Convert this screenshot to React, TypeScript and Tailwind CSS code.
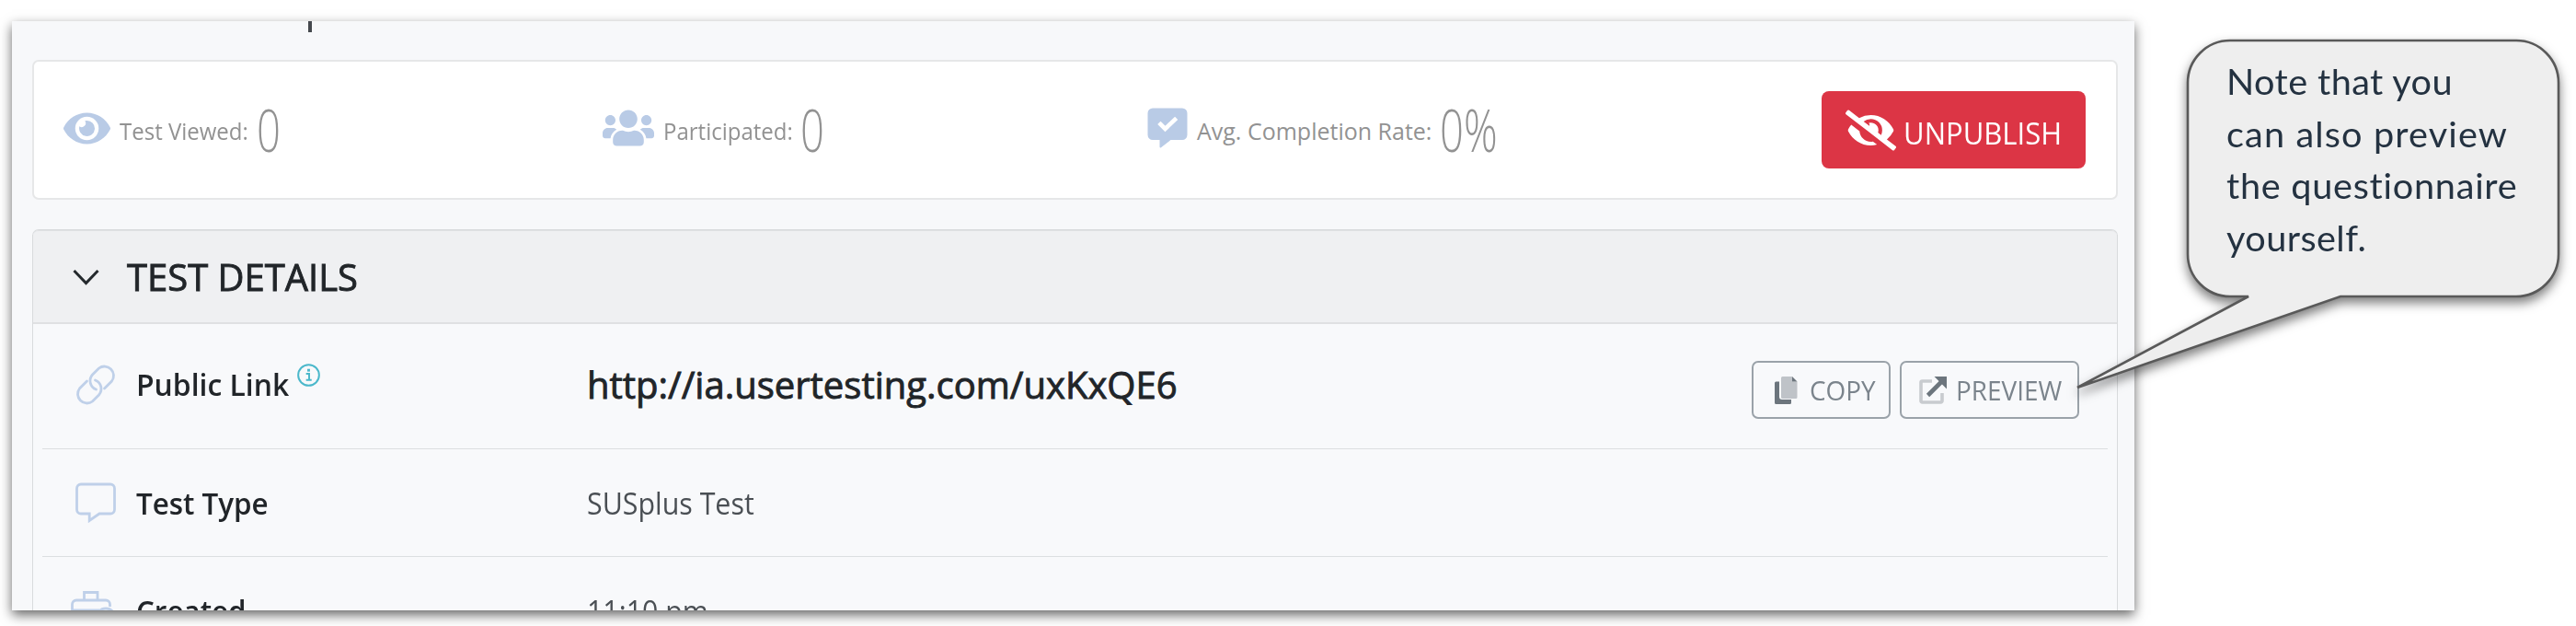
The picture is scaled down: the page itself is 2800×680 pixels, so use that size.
import type { ReactNode } from "react"
import { FaEye, FaEyeSlash, FaUsers } from "react-icons/fa"

const CommentCheckIcon = () => (
  <svg viewBox="0 0 44 44" className="h-[44px] w-[44px]" fill="none">
    <path d="M6 0.5h32a5.5 5.5 0 0 1 5.5 5.5v23.500a5.500 5.500 0 0 1-5.500 5.500H25.500L15 43.300c-.8.500-1.500.100-1.500-.8V35H6a5.500 5.500 0 0 1-5.500-5.500V6A5.500 5.500 0 0 1 6 .5z" fill="#b9cbe6" />
    <path d="M14.500 18l5 5L30 13" stroke="#fff" strokeWidth="4.600" strokeLinecap="square" />
  </svg>
)

const LinkIcon = () => (
  <svg viewBox="0 0 44 44" className="h-[44px] w-[44px]" fill="none" stroke="#bfd0e9" strokeWidth="2.8" strokeLinecap="round">
    <path d="M31.500 26l8-8A10 10 0 0 0 25.500 4l-7 7a10 10 0 0 0 4 16" />
    <path d="M12.500 18l-8 8a10 10 0 0 0 14 14l7-7a10 10 0 0 0-4-16" />
  </svg>
)

const CommentIcon = () => (
  <svg viewBox="0 0 44 44" className="h-[44px] w-[44px]" fill="none" stroke="#bfd0e9" strokeWidth="2.8">
    <path d="M6 2h32a4.500 4.500 0 0 1 4.500 4.500v23a4.500 4.500 0 0 1-4.500 4.500H26L15.200 41.500V34H6a4.500 4.500 0 0 1-4.500-4.500v-23A4.500 4.500 0 0 1 6 2z" />
  </svg>
)

const BriefcaseClockIcon = () => (
  <svg viewBox="0 0 48 44" className="h-[44px] w-[48px]" fill="none" stroke="#bfd0e9" strokeWidth="2.8">
    <path d="M28 38H6a4.500 4.500 0 0 1-4.500-4.500v-19A4.500 4.500 0 0 1 6 10h32a4.500 4.500 0 0 1 4.500 4.500V17M14.500 10V1.500h14.500V10M1.500 21H31" />
    <circle cx="38" cy="29.500" r="10.500" />
    <path d="M38 24v6h5" />
  </svg>
)

const InfoIcon = () => (
  <svg viewBox="0 0 24 24" className="h-[25px] w-[25px]" fill="none" stroke="#4bb8cb">
    <circle cx="12" cy="12" r="10.900" strokeWidth="1.900" />
    <path d="M9.300 10.500h3.200v6.500M9.300 17h5.800" strokeWidth="1.900" />
    <rect x="10.600" y="5.500" width="2.800" height="2.800" fill="#4bb8cb" stroke="none" />
  </svg>
)

const CopyIcon = () => (
  <svg viewBox="0 0 26 30" className="h-[30px] w-[26px]">
    <path d="M0 7a1.500 1.500 0 0 1 1.500-1.500H5V22a3 3 0 0 0 3 3h10v3.500a1.500 1.500 0 0 1-1.500 1.500h-15A1.500 1.500 0 0 1 0 28.500z" fill="#6c757d" />
    <path d="M7 1.500A1.500 1.500 0 0 1 8.500 0H19v5.500h5.500v17A1.500 1.500 0 0 1 23 24H8.500A1.500 1.500 0 0 1 7 22.500z" fill="#bfc3c8" />
    <path d="M19 0l5.500 5.500H19z" fill="#6c757d" />
  </svg>
)

const ExternalIcon = () => (
  <svg viewBox="0 0 30 30" className="h-[30px] w-[30px]" fill="none">
    <path d="M14 5H3.500A1.500 1.500 0 0 0 2 6.500v20A1.500 1.500 0 0 0 3.500 28h20a1.500 1.500 0 0 0 1.500-1.500V18" stroke="#c8cbcf" strokeWidth="3.600" />
    <path d="M9.500 20.500L24 6" stroke="#6c757d" strokeWidth="4.600" />
    <path d="M16.500 0H30v13.500l-4-4L20.500 4z" fill="#6c757d" />
  </svg>
)

type StatProps = {
  icon: ReactNode
  label: string
  value: string
  className: string
  labelClass: string
}

const Stat = ({ icon, label, value, className, labelClass }: StatProps) => (
  <div className={`flex shrink-0 items-center whitespace-nowrap text-[#929292] ${className}`}>
    <div className="mr-[10px] mb-[4px] shrink-0 text-[#b9cbe6]">{icon}</div>
    <div className={`shrink-0 origin-left pt-[2px] text-[25px] leading-none ${labelClass}`}>{label}</div>
    <div className="origin-left scale-x-[0.71] text-[64px] leading-none font-light">{value}</div>
  </div>
)

type RowProps = {
  icon: ReactNode
  label: ReactNode
  children: ReactNode
  className: string
}

const Row = ({ icon, label, children, className }: RowProps) => (
  <div className={`mx-[10px] flex shrink-0 items-center whitespace-nowrap ${className}`}>
    <div className="flex w-[102px] shrink-0 pl-[36px]">{icon}</div>
    <div className="flex w-[490px] shrink-0 items-center text-[33px] leading-none font-semibold text-[#212529]">{label}</div>
    {children}
  </div>
)

type OutlineButtonProps = {
  icon: ReactNode
  label: string
  className: string
}

const OutlineButton = ({ icon, label, className }: OutlineButtonProps) => (
  <button className={`flex h-[63px] shrink-0 items-center rounded-[7px] border-2 border-[#9aa2a9] text-[30px] leading-none text-[#7b848c] ${className}`}>
    {icon}
    <span className="inline-block origin-left scale-x-[0.93]">{label}</span>
  </button>
)

const Callout = () => (
  <div className="relative mt-[43px] ml-[57px] h-[281px] w-[405px] shrink-0 pt-[17px] pl-[43px] font-['Lato',sans-serif] text-[38.500px] leading-[56.500px] whitespace-nowrap text-[#243241]">
    {/* bubble and its pointer, reaching over the panel to the preview button */}
    <svg
      viewBox="-123 0 530 382"
      className="absolute top-0 left-[-123px] h-[382px] w-[530px] overflow-visible drop-shadow-[0_6px_6px_rgba(0,0,0,0.5)]"
    >
      <path
        d="M47 1H358A46 46 0 0 1 404 47V233A46 46 0 0 1 358 279H167L-119 378L67 279H47A46 46 0 0 1 1 233V47A46 46 0 0 1 47 1Z"
        fill="#eee"
        stroke="#595959"
        strokeWidth="2.600"
      />
    </svg>
    <div className="relative origin-left scale-x-[1.03]">
      <div className="tracking-[0.4px]">Note that you</div>
      <div className="tracking-[1.1px]">can also preview</div>
      <div className="tracking-[0.7px]">the questionnaire</div>
      <div className="tracking-[0.4px]">yourself.</div>
    </div>
  </div>
)

const App = () => (
  <div className="flex h-[680px] w-[2800px] items-start overflow-hidden bg-white font-['Open_Sans','Noto_Sans',sans-serif]">
    <div className="mt-[23px] ml-[13px] flex h-[640px] w-[2307px] shrink-0 flex-col shadow-[0_5px_12px_rgba(0,0,0,0.6)]">
      <div className="flex h-full flex-col overflow-hidden bg-[#f7f8fa]">
        <div className="ml-[322px] h-[12px] w-[4px] shrink-0 bg-[#45494e]" />

        <div className="mx-[22px] mt-[30px] flex h-[152px] w-[2267px] shrink-0 items-center rounded-[7px] border-2 border-[#e6e7e8] bg-white">
          <Stat icon={<FaEye size={51} />} label="Test Viewed:" value="0" className="w-[586px] pl-[32px]" labelClass="w-[149px] scale-x-[0.96]" />
          <Stat icon={<FaUsers size={56} />} label="Participated:" value="0" className="w-[592px] pl-[32px]" labelClass="w-[149px] scale-x-[0.96]" />
          <Stat icon={<CommentCheckIcon />} label="Avg. Completion Rate:" value="0%" className="w-[765px] pl-[32px]" labelClass="w-[264px]" />
          <button className="flex h-[84px] w-[287px] items-center rounded-[8px] bg-[#dc3545] pl-[26px] text-[32px] leading-none text-white">
            <FaEyeSlash size={55} className="mr-[8px] shrink-0" />
            <span className="inline-block origin-left scale-x-[0.97] pt-[7px]">UNPUBLISH</span>
          </button>
        </div>

        <div className="mx-[22px] mt-[32px] w-[2267px] shrink-0 rounded-t-[7px] border border-b-0 border-[#d9dbdd] bg-[#f8f9fb]">
          <div className="flex h-[102px] items-center rounded-t-[6px] border-t border-b-2 border-[#dfe0e2] bg-[#eff0f2] pl-[43px]">
            <svg viewBox="0 0 29 18" className="mr-[30px] h-[18px] w-[29px]" fill="none" stroke="#24292d" strokeWidth="3">
              <path d="M1.500 2l13 13.500L27.500 2" />
            </svg>
            <h2 className="origin-left scale-x-[0.975] text-[41px] leading-none whitespace-nowrap text-[#212529] [-webkit-text-stroke:0.9px_#212529]">
              TEST DETAILS
            </h2>
          </div>

          <Row
            className="h-[136px] border-b border-[#dcdfe1] pb-[4px]"
            icon={<LinkIcon />}
            label={
              <>
                <span className="inline-block w-[175px] origin-left scale-x-[0.965]">Public Link</span>
                <span className="mb-[20px]">
                  <InfoIcon />
                </span>
              </>
            }
          >
            <div className="w-[1266px] shrink-0 text-[40px] leading-none text-[#212529] [-webkit-text-stroke:0.9px_#212529]">
              http://ia.usertesting.com/uxKxQE6
            </div>
            <div className="mt-[12px] flex gap-[10px]">
              <OutlineButton icon={<CopyIcon />} label="COPY" className="w-[151px] gap-[12px] pl-[23px]" />
              <OutlineButton icon={<ExternalIcon />} label="PREVIEW" className="w-[195px] gap-[10px] pl-[19px]" />
            </div>
          </Row>
          <Row
            className="h-[117px] border-b border-[#dcdfe1]"
            icon={<CommentIcon />}
            label={<span className="origin-left scale-x-[0.95]">Test Type</span>}
          >
            <span className="origin-left scale-x-[0.92] text-[33px] leading-none text-[#4a4f54]">SUSplus Test</span>
          </Row>
          <Row
            className="h-[117px]"
            icon={
              <div className="-ml-[5px]">
                <BriefcaseClockIcon />
              </div>
            }
            label={<span className="origin-left scale-x-[0.95]">Created</span>}
          >
            <span className="origin-left scale-x-[0.92] text-[33px] leading-none text-[#4a4f54]">11:10 pm</span>
          </Row>
        </div>
      </div>
    </div>
    <Callout />
  </div>
)

export default App
